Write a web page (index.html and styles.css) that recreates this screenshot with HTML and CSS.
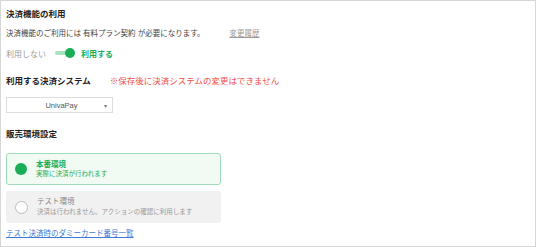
FILE: index.html
```html
<!DOCTYPE html>
<html lang="ja">
<head>
    <meta charset="UTF-8">
    <title>決済設定</title>
    <link rel="stylesheet" href="styles.css">
</head>
<body>
<div class="page">
    <h2 class="head">決済機能の利用</h2>
    <p class="desc">決済機能のご利用には 有料プラン契約 が必要になります。<a class="history">変更履歴</a></p>
    <div class="switch-row">
        <span class="off">利用しない</span>
        <span class="toggle"></span>
        <span class="on">利用する</span>
    </div>

    <div class="head-row">
        <h2 class="head">利用する決済システム</h2>
        <span class="warn">※保存後に決済システムの変更はできません</span>
    </div>
    <div class="select">
        <span class="select-text">UnivaPay</span>
        <span class="caret">&#9662;</span>
    </div>

    <h2 class="head head-env">販売環境設定</h2>
    <div class="card card-on">
        <span class="radio radio-on"></span>
        <div class="card-text">
            <div class="card-title">本番環境</div>
            <div class="card-sub">実際に決済が行われます</div>
        </div>
    </div>
    <div class="card card-off">
        <span class="radio"></span>
        <div class="card-text">
            <div class="card-title">テスト環境</div>
            <div class="card-sub">決済は行われません。アクションの確認に利用します</div>
        </div>
    </div>
    <a class="dummy">テスト決済時のダミーカード番号一覧</a>
</div>
</body>
</html>
```

FILE: styles.css
```css
*{
    margin:0;
    padding:0;
    box-sizing:border-box;
}
body{
    font-family:"Liberation Sans","Noto Sans CJK JP",sans-serif;
    color:#333;
    background:#fff;
}
.page{
    width:536px;
    height:247px;
    border:1px solid #d6d6d6;
    padding:7px 5px 0 5px;
}
.head{
    font-size:8.5px;
    font-weight:700;
    line-height:12px;
    color:#222;
}
.desc{
    margin-top:8px;
    font-size:7.5px;
    line-height:12px;
    color:#444;
}
.history{
    margin-left:25px;
    color:#999;
    text-decoration:underline;
}
.switch-row{
    margin-top:7px;
    height:12px;
    display:flex;
    align-items:center;
    font-size:8px;
}
.off{
    color:#999;
}
.toggle{
    position:relative;
    width:20px;
    height:10px;
    margin:0 6px 0 9px;
}
.toggle::before{
    content:"";
    position:absolute;
    left:0;
    top:3px;
    width:16px;
    height:4px;
    border-radius:2px;
    background:#a8e2bf;
}
.toggle::after{
    content:"";
    position:absolute;
    right:0;
    top:0;
    width:10px;
    height:10px;
    border-radius:50%;
    background:#1aad55;
}
.on{
    color:#1aad55;
    font-weight:700;
}
.head-row{
    margin-top:16px;
    display:flex;
    align-items:center;
}
.warn{
    margin-left:19px;
    font-size:8.5px;
    line-height:12px;
    color:#f0504a;
}
.select{
    margin-top:10px;
    width:107px;
    height:16px;
    border:1px solid #ddd;
    display:flex;
    align-items:center;
    padding:0 5px 0 12px;
    font-size:7.5px;
    color:#555;
}
.select-text{
    flex:1;
    text-align:center;
}
.caret{
    font-size:6px;
    color:#777;
}
.head-env{
    margin-top:15px;
}
.card{
    width:215px;
    height:32px;
    border-radius:3px;
    display:flex;
    align-items:center;
    padding-left:8px;
}
.card-on{
    margin-top:13px;
    border:1px solid #9fdcb9;
    background:#f1fbf4;
}
.card-off{
    margin-top:6px;
    background:#f1f1f1;
    padding-left:9px;
}
.radio{
    width:13px;
    height:13px;
    border-radius:50%;
    border:1px solid #bbb;
    background:#fff;
    margin-right:9px;
}
.radio-on{
    width:12px;
    height:12px;
    border:none;
    background:#1aad55;
}
.card-title{
    font-size:7.5px;
    line-height:9px;
    font-weight:700;
}
.card-sub{
    font-size:6.5px;
    line-height:9px;
}
.card-on .card-title,
.card-on .card-sub{
    color:#1aad55;
}
.card-off .card-title{
    font-weight:400;
    color:#888;
    line-height:10px;
}
.card-off .card-sub{
    color:#999;
    line-height:10px;
}
.dummy{
    display:block;
    margin-top:5px;
    font-size:7.5px;
    line-height:12px;
    color:#3a7bd5;
    text-decoration:underline;
}
```
